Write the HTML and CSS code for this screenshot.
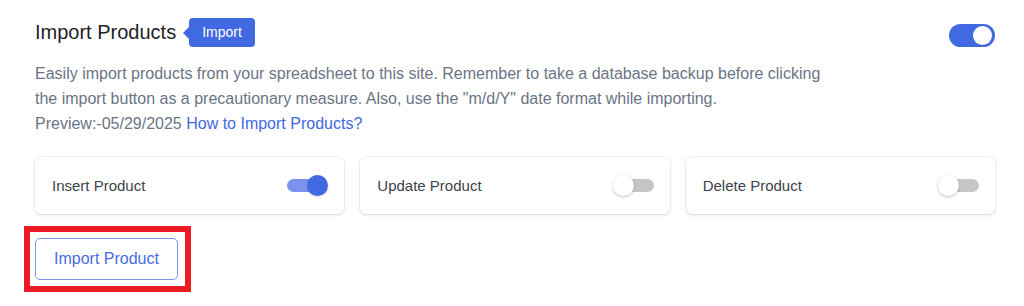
FILE: index.html
```html
<!DOCTYPE html>
<html lang="en">
<head>
<meta charset="utf-8">
<title>Import Products</title>
<link rel="stylesheet" href="styles.css">
</head>
<body>
<div class="panel">
  <div class="header">
    <h2 class="title">Import Products</h2>
    <span class="badge">Import</span>
    <span class="switch switch-on"><span class="switch-knob"></span></span>
  </div>
  <p class="desc">Easily import products from your spreadsheet to this site. Remember to take a database backup before clicking the import button as a precautionary measure. Also, use the "m/d/Y" date format while importing.<br>Preview:-05/29/2025 <a class="link" href="#">How to Import Products?</a></p>
  <div class="options">
    <div class="card">
      <span class="card-label">Insert Product</span>
      <span class="mini mini-on"><span class="mini-track"></span><span class="mini-knob"></span></span>
    </div>
    <div class="card">
      <span class="card-label">Update Product</span>
      <span class="mini"><span class="mini-track"></span><span class="mini-knob"></span></span>
    </div>
    <div class="card">
      <span class="card-label">Delete Product</span>
      <span class="mini"><span class="mini-track"></span><span class="mini-knob"></span></span>
    </div>
  </div>
  <div class="highlight">
    <button class="btn" type="button">Import Product</button>
  </div>
</div>
</body>
</html>
```
FILE: styles.css
```css
* { box-sizing: border-box; }
html, body { margin: 0; padding: 0; background: #ffffff; }
body {
  font-family: "Liberation Sans", Arial, sans-serif;
  color: #1d2327;
}
.panel {
  width: 1024px;
  padding: 18px 29px 0 35px;
}
.header {
  display: flex;
  align-items: center;
  height: 29px;
}
.title {
  margin: 0;
  font-size: 20px;
  line-height: 29px;
  font-weight: 400;
  color: #1d2327;
}
.badge {
  position: relative;
  margin-left: 13px;
  height: 29px;
  line-height: 29px;
  padding: 0 13px;
  background: #4169e1;
  color: #ffffff;
  font-size: 14px;
  border-radius: 4px;
}
.badge::before {
  content: "";
  position: absolute;
  left: -6px;
  top: 9px;
  border-top: 6px solid transparent;
  border-bottom: 6px solid transparent;
  border-right: 6px solid #4169e1;
}
.switch {
  position: relative;
  margin-left: auto;
  align-self: flex-end;
  width: 46px;
  height: 23px;
  border-radius: 12px;
  background: #4169e1;
}
.switch-knob {
  position: absolute;
  top: 2px;
  right: 3px;
  width: 19px;
  height: 19px;
  border-radius: 50%;
  background: #ffffff;
}
.desc {
  margin: 14px 0 0 0;
  max-width: 795px;
  font-size: 16px;
  line-height: 25px;
  color: #6b7485;
}
.link {
  color: #4169e1;
  text-decoration: none;
}
.options {
  display: grid;
  grid-template-columns: repeat(3, 1fr);
  gap: 16px;
  margin-top: 21px;
}
.card {
  display: flex;
  align-items: center;
  justify-content: space-between;
  height: 57px;
  padding: 0 16px 0 17px;
  background: #ffffff;
  border-radius: 6px;
  box-shadow: 0 1px 3px rgba(30, 45, 80, 0.16), 0 0 0 1px rgba(30, 45, 80, 0.04);
}
.card-label {
  font-size: 15px;
  color: #3c434a;
}
.mini {
  position: relative;
  width: 41px;
  height: 21px;
}
.mini-track {
  position: absolute;
  left: 1px;
  right: 0;
  top: 4px;
  height: 13px;
  border-radius: 7px;
  background: #c6c6c6;
}
.mini-knob {
  position: absolute;
  left: 0;
  top: 0;
  width: 21px;
  height: 21px;
  border-radius: 50%;
  background: #ffffff;
  box-shadow: 0 1px 3px rgba(0, 0, 0, 0.25);
}
.mini-on .mini-track {
  left: 0;
  right: 2px;
  background: #7b93ec;
}
.mini-on .mini-knob {
  left: auto;
  right: 0;
  background: #4169e1;
  box-shadow: 0 1px 2px rgba(0, 0, 0, 0.15);
}
.highlight {
  display: inline-block;
  margin: 12px 0 0 -11px;
  padding: 6px 7px 6px 5px;
  border: 6px solid #ed1c24;
}
.btn {
  display: block;
  height: 42px;
  padding: 0 18px;
  background: #ffffff;
  border: 1px solid #7b93ec;
  border-radius: 5px;
  font-family: "Liberation Sans", Arial, sans-serif;
  font-size: 16px;
  color: #4a6ce2;
  cursor: pointer;
}
```
